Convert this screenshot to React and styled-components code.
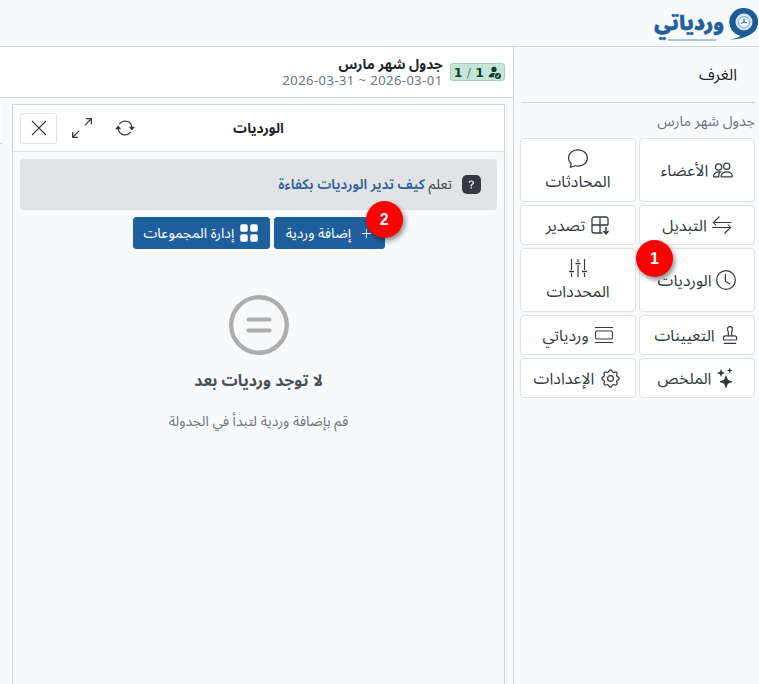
import styled, {createGlobalStyle} from 'styled-components';
import {
    BsArrowRepeat,
    BsArrowsAngleExpand,
    BsChat,
    BsClock,
    BsGridFill,
    BsPeople,
    BsPersonFillCheck,
    BsPlusLg,
    BsQuestionLg,
    BsStars,
} from 'react-icons/bs';
import {TbSettings} from 'react-icons/tb';
import {LuStamp} from 'react-icons/lu';

const FONT = '"Noto Sans", "Noto Sans Arabic", "DejaVu Sans", sans-serif';

const GlobalStyle = createGlobalStyle`
    html, body {
        margin: 0;
        height: 100%;
        background: #f8f9fa;
    }
    body {
        font-family: ${FONT};
        color: #212529;
        overflow: hidden;
    }
    * {
        box-sizing: border-box;
    }
`;

const Page = styled.div`
    direction: rtl;
    width: 759px;
    height: 684px;
    display: flex;
    flex-direction: column;
`;

const TopBar = styled.header`
    height: 47px;
    flex: none;
    display: flex;
    align-items: center;
    border-bottom: 1px solid #ced4da;
`;

const LogoWrap = styled.div`
    display: flex;
    align-items: center;
    gap: 4px;
`;

const LogoText = styled.span`
    position: relative;
    font-size: 20px;
    font-weight: 900;
    line-height: 30px;
    color: #1f5f9e;
    -webkit-text-stroke: 0.5px #1f5f9e;
    &::after {
        content: '';
        position: absolute;
        left: 14px;
        right: 8px;
        bottom: -3px;
        height: 2px;
        background: #a9c4e0;
    }
`;

const Body = styled.div`
    flex: 1;
    display: flex;
    min-height: 0;
`;

const Sidebar = styled.aside`
    width: 246px;
    flex: none;
    padding: 0 4px 0 7px;
    border-left: 1px solid #ced4da;
`;

const RoomsLink = styled.div`
    height: 56px;
    padding: 0 18px 0 0;
    display: flex;
    align-items: center;
    font-size: 16px;
    color: #212529;
    border-bottom: 1px solid #ced4da;
`;

const SectionLabel = styled.div`
    height: 35px;
    padding-top: 1px;
    display: flex;
    align-items: center;
    font-size: 14.300px;
    color: #6c757d;
`;

const MenuGrid = styled.div`
    display: grid;
    grid-template-columns: 116px 116px;
    gap: 3px;
`;

const MenuButton = styled.div`
    position: relative;
    height: ${({$tall}) => ($tall ? '64px' : '40px')};
    background: #fff;
    border: 1px solid #dee2e6;
    border-radius: 4px;
    display: flex;
    flex-direction: ${({$stack}) => ($stack ? 'column' : 'row')};
    align-items: center;
    justify-content: center;
    gap: ${({$stack}) => ($stack ? '2px' : '5px')};
    font-size: 16px;
    line-height: 22px;
    color: #343a40;
    svg {
        flex: none;
        font-size: 20px;
    }
`;

const Marker = styled.span`
    position: absolute;
    width: 37px;
    height: 37px;
    top: ${({$top}) => $top};
    left: ${({$left}) => $left};
    border-radius: 50%;
    background: #ff0000;
    color: #fff;
    font-family: "Liberation Sans", sans-serif;
    font-weight: 700;
    font-size: 16px;
    display: flex;
    align-items: center;
    justify-content: center;
    box-shadow: 2px 3px 5px rgba(0, 0, 0, 0.45);
    z-index: 2;
`;

const Main = styled.main`
    flex: 1;
    min-width: 0;
    display: flex;
    flex-direction: column;
`;

const ScheduleHead = styled.div`
    height: 51px;
    flex: none;
    background: #fff;
    border-bottom: 1px solid #ced4da;
    display: flex;
    align-items: center;
    padding: 0 8px;
    gap: 7px;
`;

const CountBadge = styled.div`
    height: 18px;
    padding: 0 3px;
    display: flex;
    align-items: center;
    gap: 3px;
    background: #c3e6d8;
    border: 1px solid #a3cfbb;
    border-radius: 3px;
    color: #0f3d2e;
    font-family: "DejaVu Sans", sans-serif;
    font-size: 12.500px;
    font-weight: 700;
    svg {
        font-size: 14px;
    }
`;

const CountText = styled.span`
    direction: ltr;
    span {
        font-weight: 400;
        color: #5d7f72;
    }
`;

const ScheduleTitle = styled.div`
    font-size: 13.750px;
    font-weight: 700;
    line-height: 17px;
    color: #212529;
`;

const ScheduleDates = styled.div`
    font-size: 13px;
    line-height: 17px;
    color: #6c757d;
    letter-spacing: 0.450px;
`;

const PanelRow = styled.div`
    flex: 1;
    min-height: 0;
    display: flex;
    justify-content: space-between;
    padding: 0 8px 0 0;
`;

const Sliver = styled.div`
    width: 2px;
    height: 46px;
    background: #fff;
    border-bottom: 1px solid #ced4da;
`;

const Panel = styled.section`
    width: 493px;
    margin-top: 6px;
    border: 1px solid #ced4da;
    border-bottom: none;
    display: flex;
    flex-direction: column;
`;

const PanelHead = styled.div`
    height: 47px;
    flex: none;
    background: #fff;
    border-bottom: 1px solid #dee2e6;
    display: flex;
    align-items: center;
    padding: 0 7px;
`;

const PanelTitle = styled.div`
    flex: 1;
    text-align: center;
    font-size: 13.750px;
    font-weight: 700;
    padding-right: 126px;
    color: #212529;
`;

const HeadIcon = styled.button`
    width: ${({$boxed}) => ($boxed ? '37px' : '43px')};
    height: 31px;
    padding: 0;
    margin-right: ${({$boxed}) => ($boxed ? '3px' : '0')};
    background: #fff;
    border: 1px solid ${({$boxed}) => ($boxed ? '#dee2e6' : 'transparent')};
    border-radius: 3px;
    display: flex;
    align-items: center;
    justify-content: center;
    color: #343a40;
    font-size: 20px;
`;

const PanelBody = styled.div`
    flex: 1;
    padding: 7px 7px 0;
`;

const Notice = styled.div`
    height: 51px;
    background: #e2e3e5;
    border-radius: 4px;
    display: flex;
    align-items: center;
    gap: 10px;
    padding: 0 16px 0 0;
    font-size: 14px;
    color: #41464b;
`;

const HelpMark = styled.span`
    width: 19px;
    height: 19px;
    border-radius: 5px;
    background: #343a40;
    color: #fff;
    display: flex;
    align-items: center;
    justify-content: center;
    font-size: 11px;
`;

const NoticeLink = styled.span`
    color: #2b5f9a;
    font-weight: 600;
`;

const ButtonRow = styled.div`
    margin-top: 7px;
    display: flex;
    justify-content: center;
    gap: 4px;
    padding-left: 1px;
`;

const ActionButton = styled.button`
    position: relative;
    height: 32px;
    padding: 0 ${({$pad}) => $pad};
    background: #1f5f9e;
    border: 1px solid #1f5f9e;
    border-radius: 3px;
    color: #fff;
    font-family: inherit;
    font-size: 14px;
    display: flex;
    align-items: center;
    gap: ${({$gap}) => $gap};
    svg {
        font-size: ${({$icon}) => $icon};
    }
`;

const Empty = styled.div`
    margin-top: 46px;
    display: flex;
    flex-direction: column;
    align-items: center;
`;

const EmptyTitle = styled.h3`
    margin: 13px 0 0;
    font-size: 16px;
    line-height: 24px;
    font-weight: 700;
    color: #495057;
`;

const EmptyText = styled.p`
    margin: 19px 0 0;
    font-size: 14px;
    line-height: 20px;
    color: #6c757d;
`;

const LogoMark = () => (
    <svg width="31" height="36" viewBox="0 0 31 36">
        <path
            d="M16 3a14 14 0 0 1 6 26.700C16 33 8 34.500 2 34.500c5-.8 8.500-2 10.500-3.800A14 14 0 0 1 16 3Z"
            fill="#1c5a98"
        />
        <circle cx="16" cy="17" r="8.500" fill="#d5e4f2" />
        <circle cx="16" cy="17" r="5.500" fill="#eef4fa" stroke="#7da7cf" strokeWidth="1" />
        <path d="M16 13.500V17l-3 1.500M16 17l3 1" stroke="#1c5a98" strokeWidth="1" fill="none" />
    </svg>
);

const SwapIcon = () => (
    <svg width="20" height="20" viewBox="0 0 20 20" fill="none" stroke="currentColor" strokeWidth="1.100">
        <path d="M7.500 1.500 1.500 7.500H19.500M4 10.500 1.500 7.500" />
        <path d="M.5 12.500H18.500L12.500 18.500M16 9.500 18.500 12.500" />
    </svg>
);

const TableDownIcon = () => (
    <svg width="20" height="20" viewBox="0 0 20 20" fill="none" stroke="currentColor" strokeWidth="1.300">
        <path d="M18 10V4a2 2 0 0 0-2-2H4a2 2 0 0 0-2 2v12a2 2 0 0 0 2 2h8.500M2 10h16M10 2v16" />
        <path d="M16 12v6.500M13.500 16 16 18.800l2.500-2.800" strokeWidth="1.500" />
    </svg>
);

const SlidersIcon = () => (
    <svg width="20" height="20" viewBox="0 0 20 20" fill="none" stroke="currentColor" strokeWidth="1.200">
        <path d="M3.500 1v11M3.500 15v4M10 1v3M10 7v12M16.500 1v11M16.500 15v4" />
        <path d="M1 13.500h5M7.500 5.500h5M14 13.500h5" strokeWidth="1.500" />
    </svg>
);

const ShiftsIcon = () => (
    <svg width="20" height="20" viewBox="0 0 20 20" fill="none" stroke="currentColor" strokeWidth="1.100">
        <path d="M1 2.500h18M1 17.500h18" />
        <rect x="1.500" y="6" width="17" height="8" rx="1.500" />
    </svg>
);

const CloseIcon = () => (
    <svg width="16" height="16" viewBox="0 0 16 16" fill="none" stroke="currentColor" strokeWidth="1.100">
        <path d="M1 1 15 15M15 1 1 15" />
    </svg>
);

const EmptyIcon = () => (
    <svg width="60" height="60" viewBox="0 0 60 60" fill="none" stroke="#adadad">
        <circle cx="30" cy="30" r="27.800" strokeWidth="4.400" />
        <path d="M19.500 24.500h21M19.500 35.500h21" strokeWidth="4" strokeLinecap="round" />
    </svg>
);

const MENU = [
    {label: 'الأعضاء', icon: <BsPeople />, tall: true},
    {label: 'المحادثات', icon: <BsChat />, tall: true, stack: true},
    {label: 'التبديل', icon: <SwapIcon />},
    {label: 'تصدير', icon: <TableDownIcon />},
    {label: 'الورديات', icon: <BsClock />, tall: true, marker: '1'},
    {label: 'المحددات', icon: <SlidersIcon />, tall: true, stack: true},
    {label: 'التعيينات', icon: <LuStamp strokeWidth={1.4} />},
    {label: 'وردياتي', icon: <ShiftsIcon />},
    {label: 'الملخص', icon: <BsStars />},
    {label: 'الإعدادات', icon: <TbSettings strokeWidth={1.3} size={23} />},
];

export default function App() {
    return (
        <Page>
            <GlobalStyle />
            <TopBar>
                <LogoWrap>
                    <LogoMark />
                    <LogoText>وردياتي</LogoText>
                </LogoWrap>
            </TopBar>
            <Body>
                <Sidebar>
                    <RoomsLink>الغرف</RoomsLink>
                    <SectionLabel>جدول شهر مارس</SectionLabel>
                    <MenuGrid>
                        {MENU.map((item) => (
                            <MenuButton key={item.label} $tall={item.tall} $stack={item.stack}>
                                {item.icon}
                                <span>{item.label}</span>
                                {item.marker && <Marker $top="-9px" $left="-4px">{item.marker}</Marker>}
                            </MenuButton>
                        ))}
                    </MenuGrid>
                </Sidebar>
                <Main>
                    <ScheduleHead>
                        <CountBadge>
                            <BsPersonFillCheck />
                            <CountText>1 <span>/</span> 1</CountText>
                        </CountBadge>
                        <div>
                            <ScheduleTitle>جدول شهر مارس</ScheduleTitle>
                            <ScheduleDates>2026-03-01 ~ 2026-03-31</ScheduleDates>
                        </div>
                    </ScheduleHead>
                    <PanelRow>
                        <Panel>
                            <PanelHead>
                                <PanelTitle>الورديات</PanelTitle>
                                <HeadIcon><BsArrowRepeat /></HeadIcon>
                                <HeadIcon><BsArrowsAngleExpand /></HeadIcon>
                                <HeadIcon $boxed><CloseIcon /></HeadIcon>
                            </PanelHead>
                            <PanelBody>
                                <Notice>
                                    <HelpMark><BsQuestionLg /></HelpMark>
                                    <span>تعلم <NoticeLink>كيف تدير الورديات بكفاءة</NoticeLink></span>
                                </Notice>
                                <ButtonRow>
                                    <ActionButton $pad="11px" $gap="9px" $icon="13px">
                                        <BsPlusLg />
                                        إضافة وردية
                                        <Marker $top="-17px" $left="91px">2</Marker>
                                    </ActionButton>
                                    <ActionButton $pad="9.500px" $gap="5px" $icon="20px">
                                        <BsGridFill />
                                        إدارة المجموعات
                                    </ActionButton>
                                </ButtonRow>
                                <Empty>
                                    <EmptyIcon />
                                    <EmptyTitle>لا توجد ورديات بعد</EmptyTitle>
                                    <EmptyText>قم بإضافة وردية لتبدأ في الجدولة</EmptyText>
                                </Empty>
                            </PanelBody>
                        </Panel>
                        <Sliver />
                    </PanelRow>
                </Main>
            </Body>
        </Page>
    );
}
